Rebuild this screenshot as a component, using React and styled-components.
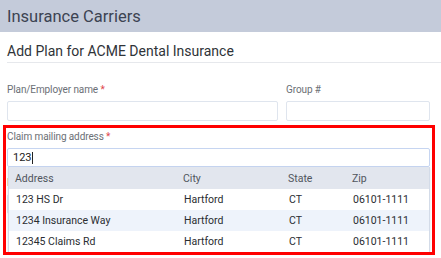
import React from "react";
import styled, { createGlobalStyle } from "styled-components";

const Global = createGlobalStyle`
  html, body { margin: 0; padding: 0; background: #fff; }
  body { font-family: Roboto, "Noto Sans", sans-serif; width: 441px; height: 258px; overflow: hidden; }
  * { box-sizing: border-box; }
`;

const Page = styled.div`
  position: relative;
  width: 441px;
  height: 258px;
  overflow: hidden;
`;

const TopBar = styled.div`
  height: 32px;
  background: #c4cbda;
  display: flex;
  align-items: center;
  padding-left: 7px;
  font-size: 16.5px;
  color: #3c4352;
`;

const Content = styled.div`
  padding-left: 7px;
`;

const Title = styled.div`
  height: 31px;
  padding-top: 9px;
  font-size: 14px;
  line-height: 20px;
  color: #2f3338;
  border-bottom: 1px solid #e6e8ec;
`;

const Form = styled.div`
  padding: 21px 11px 0 0;
  display: flex;
  flex-direction: column;
  gap: 10px;
`;

const Row = styled.div`
  display: grid;
  grid-template-columns: ${(p) => p.$cols};
  column-gap: 8px;
`;

const Field = styled.div`
  position: relative;
  display: flex;
  flex-direction: column;
`;

const Label = styled.div`
  font-size: 10px;
  line-height: 12px;
  color: #6b6f75;
  margin-bottom: 5px;
  letter-spacing: -0.1px;
`;

const Star = styled.span`
  color: #e0474c;
`;

const Input = styled.div`
  height: ${(p) => (p.$focused ? "19px" : "20px")};
  border: 1px solid ${(p) => (p.$focused ? "#c6d5f1" : "#dfe5ee")};
  border-radius: 2px;
  background: #fff;
  font-size: 11px;
  line-height: 17px;
  padding-left: 5px;
  color: #222;
  display: flex;
  align-items: center;
`;

const Caret = styled.span`
  display: inline-block;
  width: 1px;
  height: 12px;
  background: #222;
`;

const Dropdown = styled.div`
  position: absolute;
  left: 1px;
  right: 0;
  top: 100%;
  background: #fff;
  border: 1px solid #d3dbe8;
  border-top: none;
  box-shadow: 0 1px 2px rgba(0, 0, 0, 0.12);
  z-index: 2;
`;

const TRow = styled.div`
  display: grid;
  grid-template-columns: 168px 105px 64px 1fr;
  height: ${(p) => (p.$head ? "22px" : "21px")};
  align-items: center;
  padding-left: ${(p) => (p.$head ? "6px" : "7px")};
  background: ${(p) => (p.$head ? "#e2e6ee" : p.$alt ? "#eef3fb" : "#fff")};
  color: ${(p) => (p.$head ? "#50555d" : "#2a2d31")};
  font-size: 10.5px;
`;

const Cell = styled.div`
  white-space: nowrap;
`;

const Highlight = styled.div`
  position: absolute;
  left: 3px;
  top: 125px;
  width: 432px;
  height: 130px;
  border: 3px solid #ff0000;
  pointer-events: none;
  z-index: 5;
`;

const rows = [
  ["123 HS Dr", "Hartford", "CT", "06101-1111"],
  ["1234 Insurance Way", "Hartford", "CT", "06101-1111"],
  ["12345 Claims Rd", "Hartford", "CT", "06101-1111"],
];

export default function App() {
  return (
    <Page>
      <Global />
      <TopBar>Insurance Carriers</TopBar>
      <Content>
        <Title>Add Plan for ACME Dental Insurance</Title>
        <Form>
          <Row $cols="271px 1fr">
            <Field>
              <Label>
                Plan/Employer name <Star>*</Star>
              </Label>
              <Input />
            </Field>
            <Field>
              <Label>Group #</Label>
              <Input />
            </Field>
          </Row>
          <Row $cols="1fr">
            <Field>
              <Label>
                Claim mailing address <Star>*</Star>
              </Label>
              <Input $focused>
                123<Caret />
              </Input>
              <Dropdown>
                <TRow $head>
                  <Cell>Address</Cell>
                  <Cell>City</Cell>
                  <Cell>State</Cell>
                  <Cell>Zip</Cell>
                </TRow>
                {rows.map((r, i) => (
                  <TRow key={i} $alt={i === 1}>
                    {r.map((c, j) => (
                      <Cell key={j}>{c}</Cell>
                    ))}
                  </TRow>
                ))}
              </Dropdown>
            </Field>
          </Row>
          <Row $cols="145px 110px 1fr">
            <Field>
              <Label>Phone number</Label>
              <Input />
            </Field>
            <Field>
              <Label>Ext</Label>
              <Input />
            </Field>
            <Field>
              <Label>Fax number</Label>
              <Input />
            </Field>
          </Row>
        </Form>
      </Content>
      <Highlight />
    </Page>
  );
}
